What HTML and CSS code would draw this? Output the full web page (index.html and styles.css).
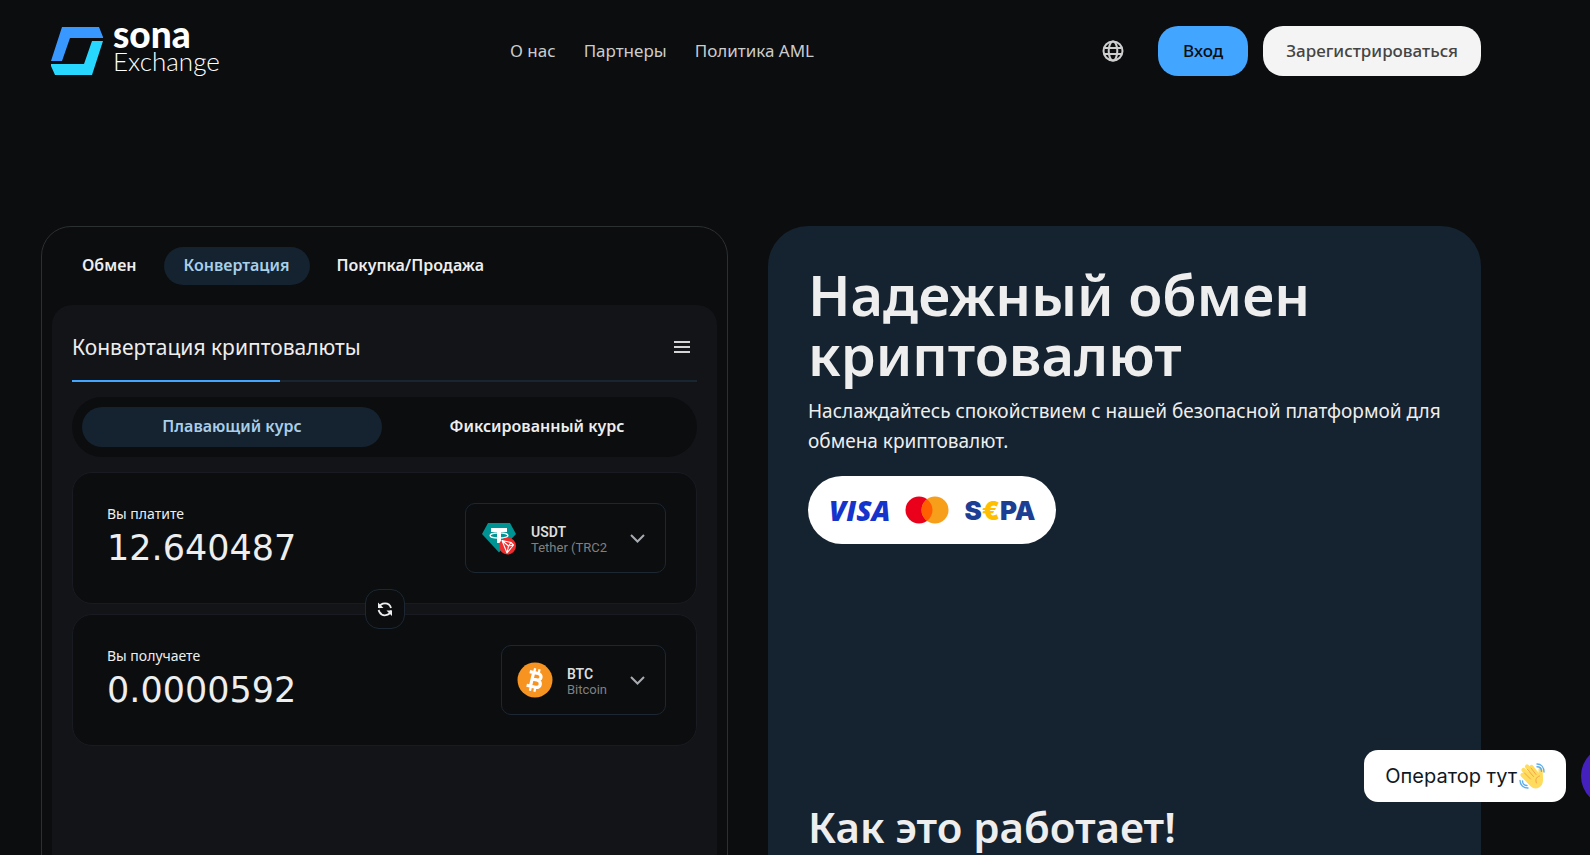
FILE: index.html
```html
<!DOCTYPE html>
<html lang="ru">
<head>
<meta charset="utf-8">
<meta name="viewport" content="width=device-width, initial-scale=1">
<title>Sona Exchange</title>
<link rel="stylesheet" href="styles.css">
</head>
<body>
<div class="page">
  <header class="header">
    <a class="logo" href="#" aria-label="Sona Exchange">
      <svg class="logo-mark" viewBox="0 0 52 48" aria-hidden="true">
        <path fill="#3898ff" d="M11 0h37l4 10v1H19L11 34H0z"/>
        <path fill="#28d7ff" d="M41 14h11L41 48H4L0 39v-2h33z"/>
      </svg>
      <span class="logo-text"><span class="logo-name">sona</span><span class="logo-sub">Exchange</span></span>
    </a>
    <nav class="nav">
      <a href="#">О нас</a>
      <a href="#">Партнеры</a>
      <a href="#">Политика AML</a>
    </nav>
    <div class="actions">
      <button class="lang" type="button" aria-label="Язык">
        <svg viewBox="0 0 22 22" fill="none" stroke="#cfcfcf" stroke-width="2" aria-hidden="true">
          <circle cx="11" cy="11" r="9.5"/><ellipse cx="11" cy="11" rx="4.3" ry="9.5"/><path d="M2.500 8h17M2.500 14h17"/>
        </svg>
      </button>
      <button class="btn btn-login" type="button">Вход</button>
      <button class="btn btn-register" type="button">Зарегистрироваться</button>
    </div>
  </header>

  <main class="main">
    <section class="widget">
      <div class="tabs" role="tablist">
        <button class="tab" type="button" role="tab">Обмен</button>
        <button class="tab tab-active" type="button" role="tab" aria-selected="true">Конвертация</button>
        <button class="tab" type="button" role="tab">Покупка/Продажа</button>
      </div>
      <form class="panel">
        <div class="panel-head">
          <h2 class="panel-title">Конвертация криптовалюты</h2>
          <button class="menu" type="button" aria-label="Меню">
            <svg viewBox="0 0 16 12" stroke="#d4d4d4" stroke-width="2" aria-hidden="true"><path d="M0 1h16M0 6h16M0 11h16"/></svg>
          </button>
        </div>
        <div class="steps"><div class="steps-done"></div></div>
        <div class="rates">
          <button class="rate rate-active" type="button">Плавающий курс</button>
          <button class="rate" type="button">Фиксированный курс</button>
        </div>
        <div class="amounts">
          <div class="amount">
            <div class="field">
              <label for="pay">Вы платите</label>
              <input id="pay" type="text" value="12.640487">
            </div>
            <button class="coin" type="button" aria-haspopup="listbox">
              <svg class="coin-icon" viewBox="0 0 36 36" aria-hidden="true">
                <path fill="#009393" d="M7 3h22l6 11-17 18.500L1 14z"/>
                <path fill="#fff" d="M10 8h16v4h-6v11h-4V12h-6z"/>
                <ellipse cx="18" cy="15.500" rx="9" ry="2.600" fill="none" stroke="#fff" stroke-width="1.200"/>
                <circle cx="26.500" cy="26" r="8.500" fill="#ef2d2d"/>
                <path fill="none" stroke="#fff" stroke-width="1.100" stroke-linejoin="round" d="M21 20.500l9 2 2.500 2.500-6.500 8zM21 20.500l6.500 5.500 5-1M27.500 26L26 33M27.500 26l2.500-3.500"/>
              </svg>
              <span class="coin-text"><span class="coin-code">USDT</span><span class="coin-name">Tether (TRC2</span></span>
              <svg class="chevron" viewBox="0 0 15 9" fill="none" stroke="#a9abb2" stroke-width="2" aria-hidden="true"><path d="M1 1l6.500 6.500L14 1"/></svg>
            </button>
          </div>
          <button class="swap" type="button" aria-label="Поменять местами">
            <svg viewBox="0 0 16 16" fill="none" stroke="#eee" stroke-width="1.800" aria-hidden="true">
              <path d="M2 7a6.200 6.200 0 0 1 12 0M14 9.500a6.200 6.200 0 0 1-11.500 1.500L1.500 9"/><path fill="#eee" stroke="none" d="M1 1.500v5.500h5.500zM15 15V9.500H9.500z"/>
            </svg>
          </button>
          <div class="amount">
            <div class="field">
              <label for="get">Вы получаете</label>
              <input id="get" type="text" value="0.0000592">
            </div>
            <button class="coin" type="button" aria-haspopup="listbox">
              <svg class="coin-icon" viewBox="0 0 36 36" aria-hidden="true">
                <circle cx="18" cy="18" r="17.500" fill="#f79421"/>
                <g transform="rotate(13 18 18)" fill="none" stroke="#fff">
                  <path stroke-width="3.200" d="M11 11h8.500c5 0 5 6.500 0 6.500H15h5c5.500 0 5.500 7.500 0 7.500h-9M15 11v14"/>
                  <path stroke-width="2.300" d="M15.500 6.500v4M20 6.500v4M15.500 25.500v4M20 25.500v4"/>
                </g>
              </svg>
              <span class="coin-text"><span class="coin-code">BTC</span><span class="coin-name">Bitcoin</span></span>
              <svg class="chevron" viewBox="0 0 15 9" fill="none" stroke="#a9abb2" stroke-width="2" aria-hidden="true"><path d="M1 1l6.500 6.500L14 1"/></svg>
            </button>
          </div>
        </div>
      </form>
    </section>

    <section class="hero">
      <div class="hero-intro">
        <h1>Надежный обмен криптовалют</h1>
        <p>Наслаждайтесь спокойствием с нашей безопасной платформой для обмена криптовалют.</p>
        <div class="payments">
          <span class="visa">VISA</span>
          <svg class="mastercard" viewBox="0 0 44 28" role="img" aria-label="Mastercard">
            <circle cx="14" cy="14" r="13.500" fill="#eb001b"/><circle cx="30" cy="14" r="13.500" fill="#f79e1b"/>
            <path fill="#ff5f00" d="M22 3.130a13.500 13.500 0 0 1 0 21.740a13.500 13.500 0 0 1 0-21.740z"/>
          </svg>
          <span class="sepa">S<span class="euro">€</span>PA</span>
        </div>
      </div>
      <h2 class="how">Как это работает!</h2>
    </section>
  </main>
</div>

<aside class="chat">
  <button class="chat-hint" type="button">Оператор тут
    <svg class="wave" viewBox="0 0 26 26" aria-hidden="true">
      <g fill="none" stroke="#ffdc5d" stroke-width="4.200" stroke-linecap="round"><path d="M3.500 12l8 8M4.500 7l9 9M8 3.500l8 9M12.500 4l6 8M21.500 6.500l.5 10"/></g>
      <path fill="#ffdc5d" d="M5 13l9-7 8 6c3 4 2.500 10-2 12.500-5 2.500-10 0-15-11.500z"/>
      <path fill="none" stroke="#ef9645" stroke-width=".8" stroke-linecap="round" d="M5.500 10l6 6M8.500 6.500l6 7M12 5l5 6.500M20.500 13c-3.500 1-4.500 4-3 7"/>
      <g fill="none" stroke="#5dadec" stroke-width="1.400" stroke-linecap="round"><path d="M18 1c4 0 7 3 7 8M18 3.800c2.800 0 4.500 2 4.500 4.500M1 17.500c0 4.500 3.500 7.500 8 7.500M3.500 18c0 2.500 2 4.500 4.500 4.500"/></g>
    </svg>
  </button>
  <button class="chat-open" type="button" aria-label="Открыть чат"></button>
</aside>
</body>
</html>
```
FILE: styles.css
```css
* { box-sizing: border-box; }

body {
  margin: 0;
  height: 100vh;
  overflow: hidden;
  background: #0b0d0f;
  color: #eee;
  font-family: "Noto Sans", "Open Sans", sans-serif;
}

button {
  padding: 0;
  border: 0;
  background: none;
  color: inherit;
  font: inherit;
}

a { color: inherit; text-decoration: none; }
h1, h2, p { margin: 0; }
svg { display: block; flex: none; }

.page { padding: 0 109px 0 41px; }

.header {
  display: grid;
  grid-template-columns: 459px 1fr auto;
  align-items: center;
  height: 102px;
  padding-left: 10px;
}

.logo { display: flex; align-items: center; gap: 10px; }
.logo-mark { width: 52px; height: 48px; }
.logo-text { display: flex; flex-direction: column; padding-bottom: 6px; font-family: Lato, sans-serif; color: #fff; }
.logo-name { font-size: 37px; font-weight: 900; line-height: 26px; }
.logo-sub { font-size: 26px; font-weight: 300; line-height: 28px; }

.nav { display: flex; gap: 28px; padding-bottom: 2px; color: #ccc; font-size: 17px; }

.actions { display: flex; align-items: center; gap: 15px; }
.lang { margin-right: 19px; }
.lang svg { width: 22px; height: 22px; }
.btn { min-width: 90px; height: 50px; padding: 0 23px 2px; border-radius: 20px; font-size: 17px; font-weight: 500; }
.btn-login { background: #42a5ff; color: #0b0d0f; }
.btn-register { background: #f4f4f4; color: #444; }

.main {
  display: grid;
  grid-template-columns: 687fr 713fr;
  gap: 40px;
  margin-top: 124px;
}

.widget {
  min-height: 800px;
  padding: 20px 10px 0;
  border: 1px solid #2b3032;
  border-radius: 30px;
}

.tabs { display: flex; gap: 7px; padding-left: 10px; }
.tab {
  height: 38px;
  padding: 0 20px 2px;
  border-radius: 20px;
  font-size: 16px;
  font-weight: 600;
}
.tab-active { background: #15222f; color: #a9cfe8; }

.panel {
  min-height: 700px;
  margin-top: 20px;
  padding: 20px;
  border-radius: 20px;
  background: #131418;
}
.panel-head { display: flex; align-items: center; justify-content: space-between; height: 43px; padding-right: 7px; }
.panel-title { font-size: 21px; font-weight: 400; }
.menu svg { width: 16px; height: 12px; }
.steps { height: 2px; margin-top: 12px; background: #182632; }
.steps-done { width: 33.3%; height: 2px; background: #42a5ff; }

.rates {
  display: grid;
  grid-template-columns: 1fr 1fr;
  gap: 5px;
  height: 60px;
  margin-top: 15px;
  padding: 10px;
  border-radius: 30px;
  background: #0b0d0f;
}
.rate { padding-bottom: 2px; border-radius: 20px; font-size: 16px; font-weight: 600; }
.rate-active { background: #15222f; color: #a9cfe8; }

.amounts { position: relative; display: grid; gap: 10px; margin-top: 15px; }
.amount {
  display: flex;
  align-items: center;
  gap: 20px;
  height: 132px;
  padding: 0 30px 0 34px;
  border: 1px solid #191b22;
  border-radius: 20px;
  background: #0b0d0f;
}
.field { display: flex; flex: 1; flex-direction: column; min-width: 0; }
.field label { font-size: 14px; line-height: 20px; }
.field input {
  width: 100%;
  height: 48px;
  padding: 0;
  border: 0;
  background: none;
  color: #eee;
  font: 35px "DejaVu Sans", sans-serif;
}
.coin {
  display: flex;
  align-items: center;
  height: 70px;
  padding: 0 20px 0 15px;
  border: 1px solid #1d2733;
  border-radius: 10px;
  background: #0b0d0f;
  font-family: Roboto, sans-serif;
  text-align: left;
}
.coin-icon { width: 36px; height: 36px; }
.coin-text { display: flex; flex-direction: column; margin: 2px 23px 0 14px; }
.coin-code { color: #ddd; font-size: 14px; font-weight: 600; line-height: 16px; }
.coin-name { color: #808080; font-size: 13px; line-height: 15px; }
.chevron { width: 15px; height: 9px; }

.swap {
  position: absolute;
  top: 50%;
  left: 50%;
  display: grid;
  place-items: center;
  width: 40px;
  height: 40px;
  border: 1px solid #1d2733;
  border-radius: 14px;
  background: #0b0d0f;
  transform: translate(-50%, -50%);
}
.swap svg { width: 16px; height: 16px; }

.hero { padding: 38px 40px; border-radius: 40px; background: #15222f; }
.hero-intro { min-height: 538px; }
h1 { font-size: 56px; font-weight: 600; line-height: 60px; }
.hero p { margin-top: 12px; font-size: 19px; line-height: 30px; }
.payments {
  display: inline-flex;
  align-items: center;
  gap: 15px;
  height: 68px;
  margin-top: 20px;
  padding: 0 21px;
  border-radius: 34px;
  background: #fff;
}
.mastercard { width: 44px; height: 28px; }
.visa { color: #1434cb; font: italic 800 28px "Open Sans", sans-serif; }
.sepa { color: #1c3f94; font: 900 26px Inter, sans-serif; }
.euro { color: #ffbe00; }
.how { font-size: 42px; font-weight: 600; line-height: 50px; }

.chat {
  position: fixed;
  right: -51px;
  bottom: 49px;
  display: flex;
  align-items: center;
  gap: 15px;
}
.chat-hint {
  display: flex;
  align-items: center;
  gap: 2px;
  height: 52px;
  padding: 0 21px;
  border-radius: 14px;
  background: #fff;
  color: #0f1822;
  font: 20px Inter, sans-serif;
}
.wave { width: 26px; height: 26px; }
.chat-open { width: 60px; height: 60px; border-radius: 50%; background: #4420be; }
```
